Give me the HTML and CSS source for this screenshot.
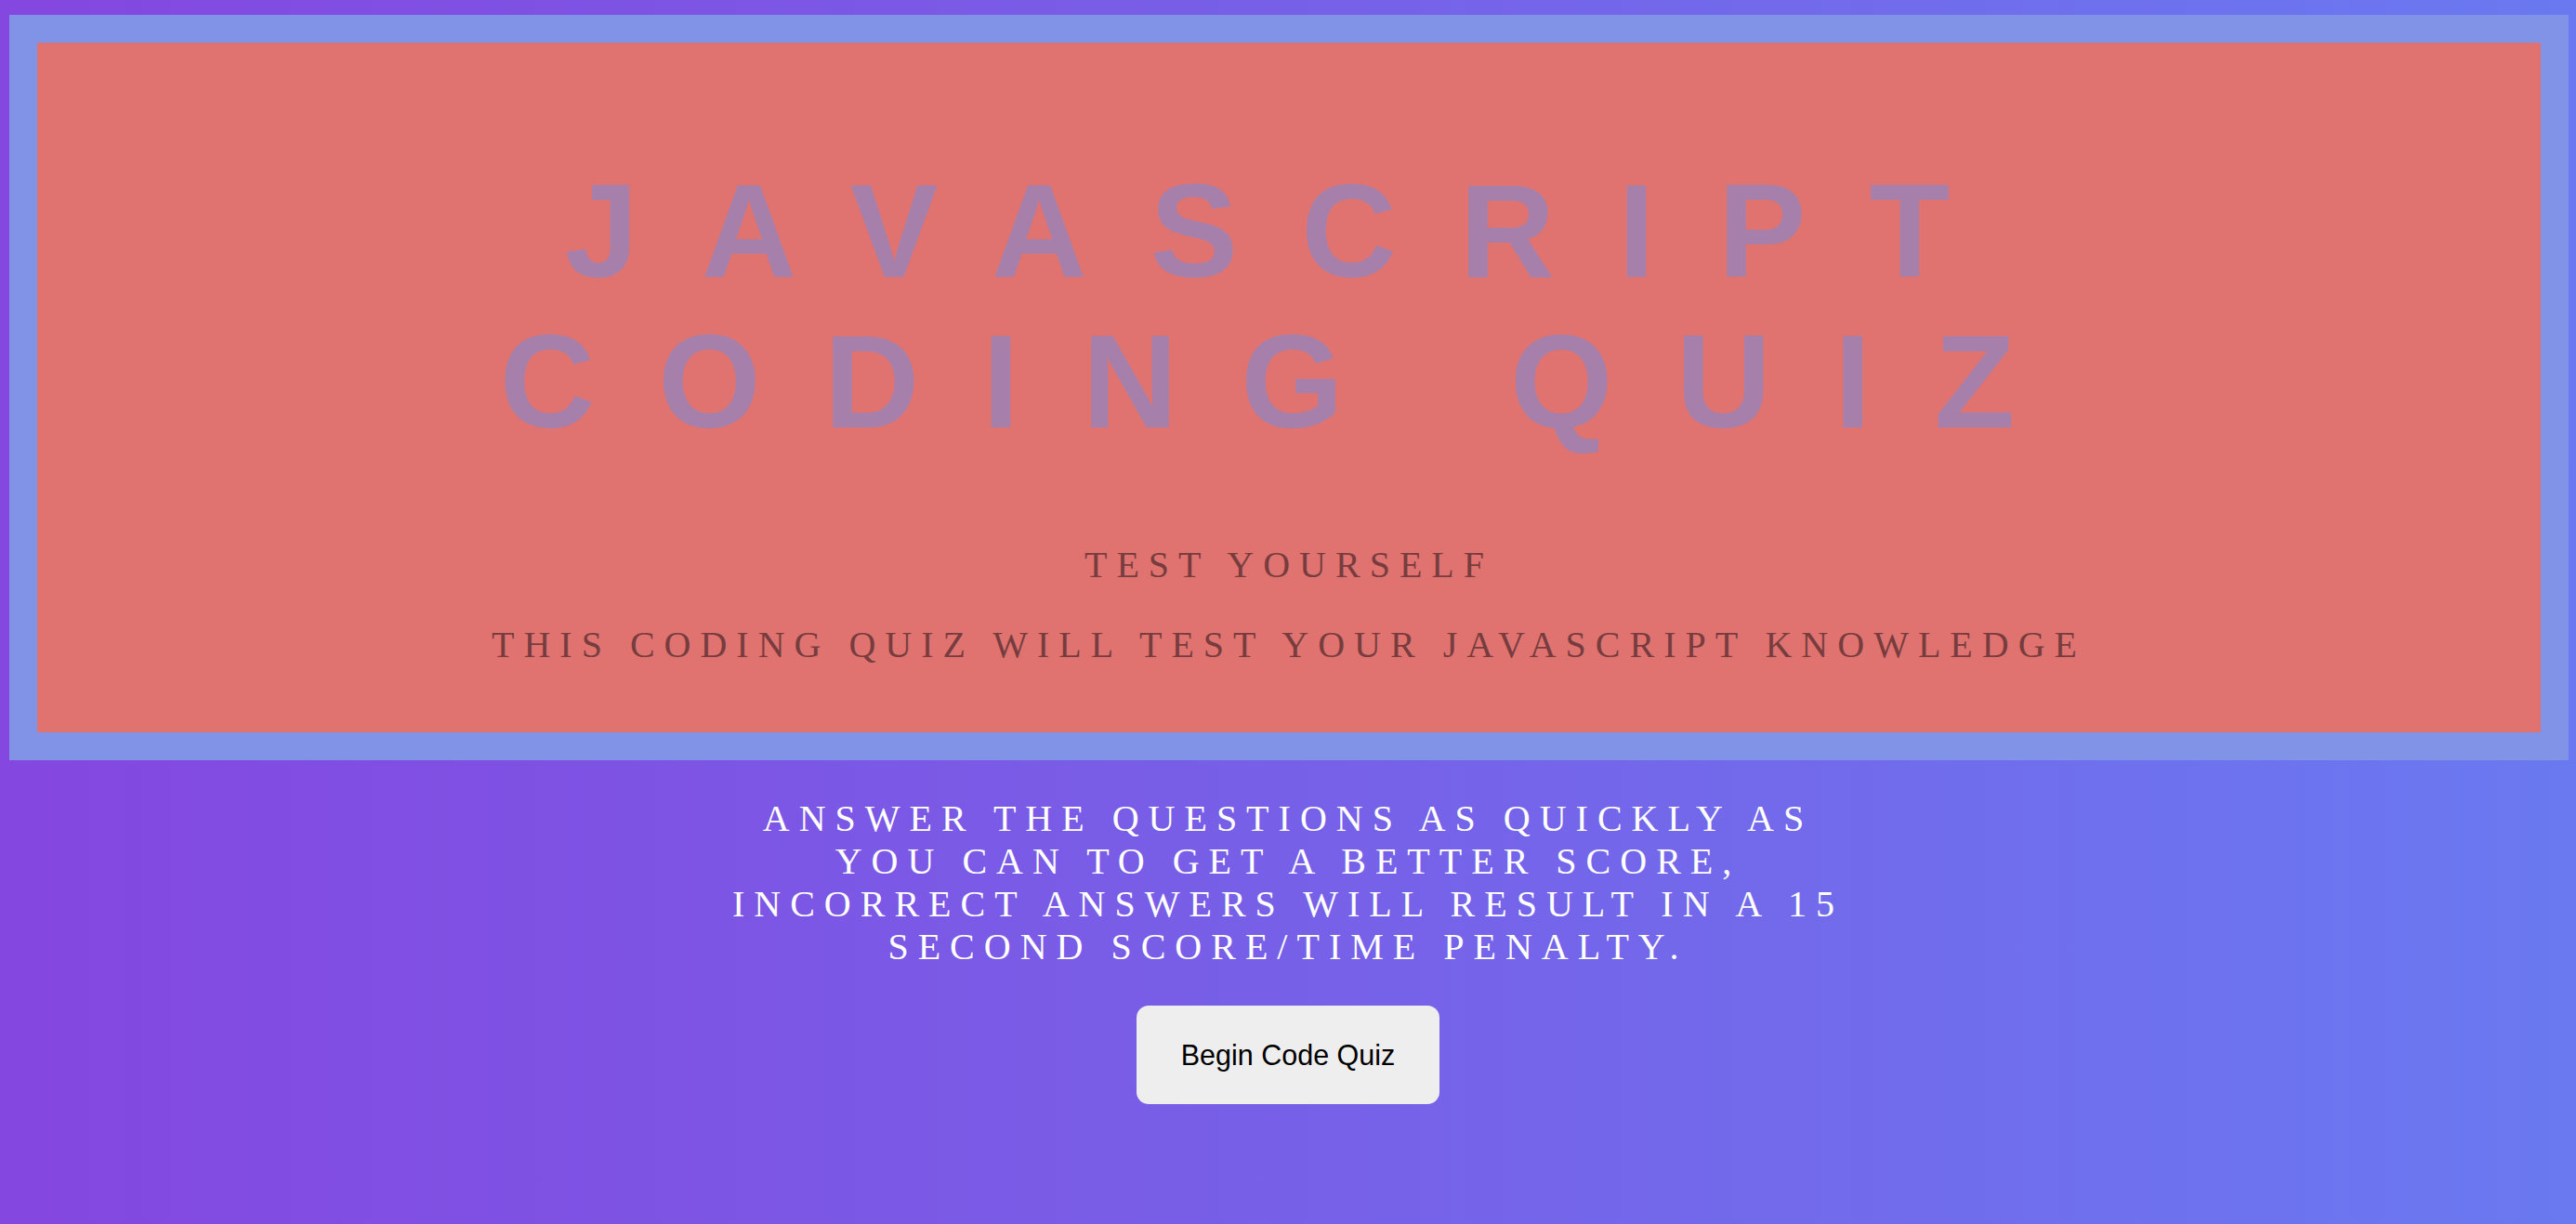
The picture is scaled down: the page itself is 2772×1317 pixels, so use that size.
FILE: index.html
```html
<!DOCTYPE html>
<html lang="en">
<head>
<meta charset="utf-8">
<title>JavaScript Coding Quiz</title>
<link rel="stylesheet" href="styles.css">
</head>
<body>
<header class="hero">
  <div class="hero-inner">
    <h1 class="title">JAVASCRIPT<br>CODING QUIZ</h1>
    <h2 class="subtitle">TEST YOURSELF</h2>
    <h2 class="subtitle subtitle-second">THIS CODING QUIZ WILL TEST YOUR JAVASCRIPT KNOWLEDGE</h2>
  </div>
</header>
<main class="intro">
  <p class="instructions">ANSWER THE QUESTIONS AS QUICKLY AS YOU CAN TO GET A BETTER SCORE, INCORRECT ANSWERS WILL RESULT IN A 15 SECOND SCORE/TIME PENALTY.</p>
  <button class="start-btn" type="button">Begin Code Quiz</button>
</main>
</body>
</html>
```

FILE: styles.css
```css
html, body {
  margin: 0;
  padding: 0;
}

body {
  min-height: 1317px;
  background: linear-gradient(to right, #8447e0 0%, #6a79f0 100%);
  font-family: "Liberation Serif", "Times New Roman", serif;
  overflow: hidden;
}

.hero {
  margin: 16px 8px 0 10px;
  border: 30px solid #8193e6;
  background: #e07370;
}

.hero-inner {
  padding: 122px 0 71px 0;
  text-align: center;
}

.title {
  margin: 0;
  font-family: "Liberation Sans", Arial, sans-serif;
  font-weight: 700;
  font-size: 142px;
  line-height: 162px;
  letter-spacing: 68px;
  word-spacing: 4px;
  color: #a680aa;
}

.subtitle {
  margin: 93px 0 0 0;
  font-family: "Liberation Serif", "Times New Roman", serif;
  font-weight: 400;
  font-size: 40px;
  line-height: 46px;
  letter-spacing: 10px;
  color: #773d3e;
}

.subtitle-second {
  margin-top: 40px;
}

.intro {
  display: flex;
  flex-direction: column;
  align-items: center;
  padding-top: 40px;
}

.instructions {
  width: 1230px;
  margin: 0 0 40px 0;
  text-align: center;
  font-size: 40px;
  line-height: 46px;
  letter-spacing: 10px;
  color: #ffffff;
}

.start-btn {
  height: 106px;
  padding: 0 48px;
  border: none;
  border-radius: 13px;
  background: #eeeeee;
  color: #000000;
  font-family: "Liberation Sans", Arial, sans-serif;
  font-size: 30.5px;
  cursor: pointer;
}
```
